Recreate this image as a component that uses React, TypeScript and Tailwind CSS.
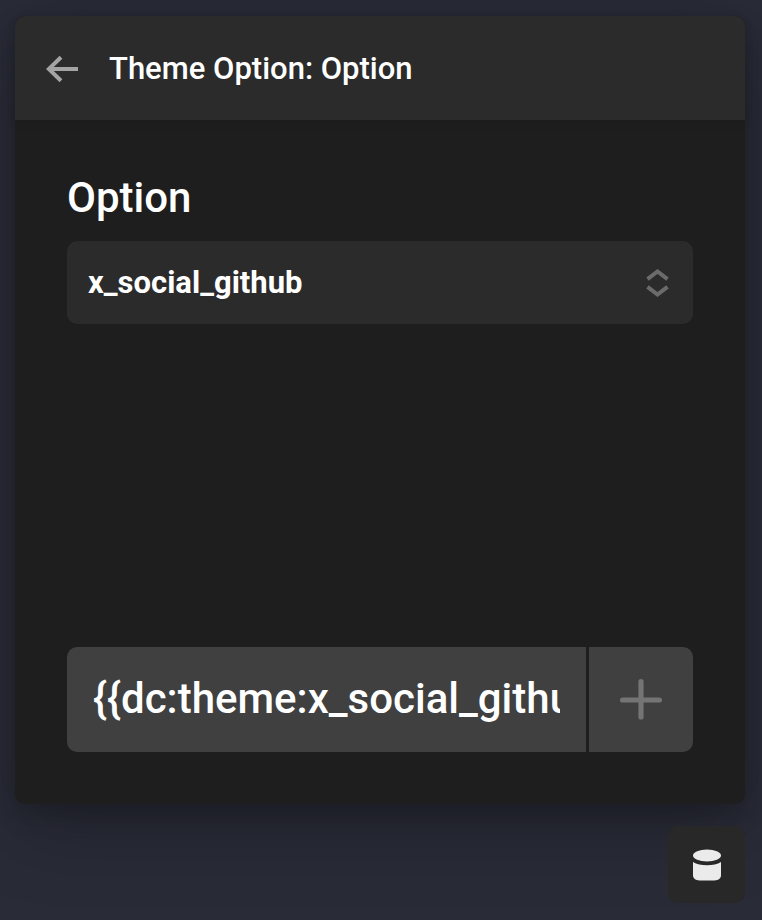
import { useState } from 'react';

const OPTIONS = ['x_social_github', 'x_social_facebook', 'x_social_linkedin'];

function BackIcon() {
  return (
    <svg className="w-8 h-8" viewBox="0 0 32 32" fill="none" stroke="currentColor" strokeWidth="4">
      <path d="M32 16H3" />
      <path d="M15 4.200L2.800 16l12.200 11.800" />
    </svg>
  );
}

function SortIcon() {
  return (
    <svg className="w-6 h-7" viewBox="0 0 24 28" fill="none" stroke="currentColor" strokeWidth="4">
      <path d="M2.500 10.200L12.500 2.500l10 7.700" />
      <path d="M2.500 17.800l10 7.700 10-7.700" />
    </svg>
  );
}

function PlusIcon() {
  return (
    <svg className="w-[42px] h-[42px]" viewBox="0 0 42 42" fill="none" stroke="currentColor" strokeWidth="5.200" strokeLinecap="round">
      <path d="M21 2.600v35.400M2.600 21h36.800" />
    </svg>
  );
}

function DatabaseIcon() {
  return (
    <svg className="w-7 h-8" viewBox="0 0 28 32" fill="currentColor">
      <ellipse cx="14" cy="6.500" rx="14" ry="6" />
      <path d="M0 13c3.500 2.200 8.500 3.200 14 3.200s10.500-1 14-3.200v13.200c0 4-4 5.300-8 5.300H8c-4 0-8-1.300-8-5.300z" />
    </svg>
  );
}

export default function App() {
  const [option, setOption] = useState(OPTIONS[0]);
  const value = `{{dc:theme:${option}}}`;

  return (
    <div className="min-h-screen flex flex-col gap-[22px] pt-4 pb-[17px] pl-[15px] pr-[17px] bg-[#292b37] font-[Roboto,sans-serif] text-white">
      <section className="flex-1 flex flex-col rounded-[10px] bg-[#1e1e1e] shadow-[0_26px_78px_rgba(0,0,0,0.22),0_10px_26px_rgba(0,0,0,0.18)]">

        {/* Header */}
        <header className="h-[104px] flex items-center gap-[31px] px-[31px] pt-[2px] rounded-t-[10px] bg-[#2b2b2b] shadow-[0_2px_8px_rgba(0,0,0,0.12)]">
          <button aria-label="Back" className="text-[#a4a4a4] cursor-pointer">
            <BackIcon />
          </button>
          <h1 className="text-[31px] leading-10 font-medium">Theme Option: Option</h1>
        </header>

        <div className="flex-1 flex flex-col p-[52px]">
          <label htmlFor="option" className="text-[42px] leading-[52px] font-medium">Option</label>
          <div className="grid items-center mt-[17px]">
            <select
              id="option"
              value={option}
              onChange={e => setOption(e.target.value)}
              className="col-start-1 row-start-1 w-full h-[83px] px-[21px] pt-[2px] appearance-none rounded-[10px] bg-[#2b2b2b] text-[31px] font-bold cursor-pointer"
            >
              {OPTIONS.map(o => (
                <option key={o} value={o}>{o}</option>
              ))}
            </select>
            <span className="col-start-1 row-start-1 justify-self-end mr-6 text-[#6b6b6b] pointer-events-none">
              <SortIcon />
            </span>
          </div>

          {/* Dynamic content string */}
          <div className="flex gap-[3px] h-[105px] mt-auto">
            <input
              type="text"
              readOnly
              value={value}
              aria-label="Dynamic content"
              className="flex-1 min-w-0 px-[26px] pb-[2px] rounded-l-[10px] bg-[#404040] text-[42px] font-medium"
            />
            <button aria-label="Insert" className="w-[104px] flex items-center justify-center rounded-r-[10px] bg-[#404040] text-[#747474] cursor-pointer">
              <PlusIcon />
            </button>
          </div>
        </div>
      </section>

      <button aria-label="Dynamic content sources" className="self-end w-[77px] h-[77px] flex items-center justify-center rounded-[10px] bg-[#282828] text-[#ebebeb] cursor-pointer">
        <DatabaseIcon />
      </button>
    </div>
  );
}
